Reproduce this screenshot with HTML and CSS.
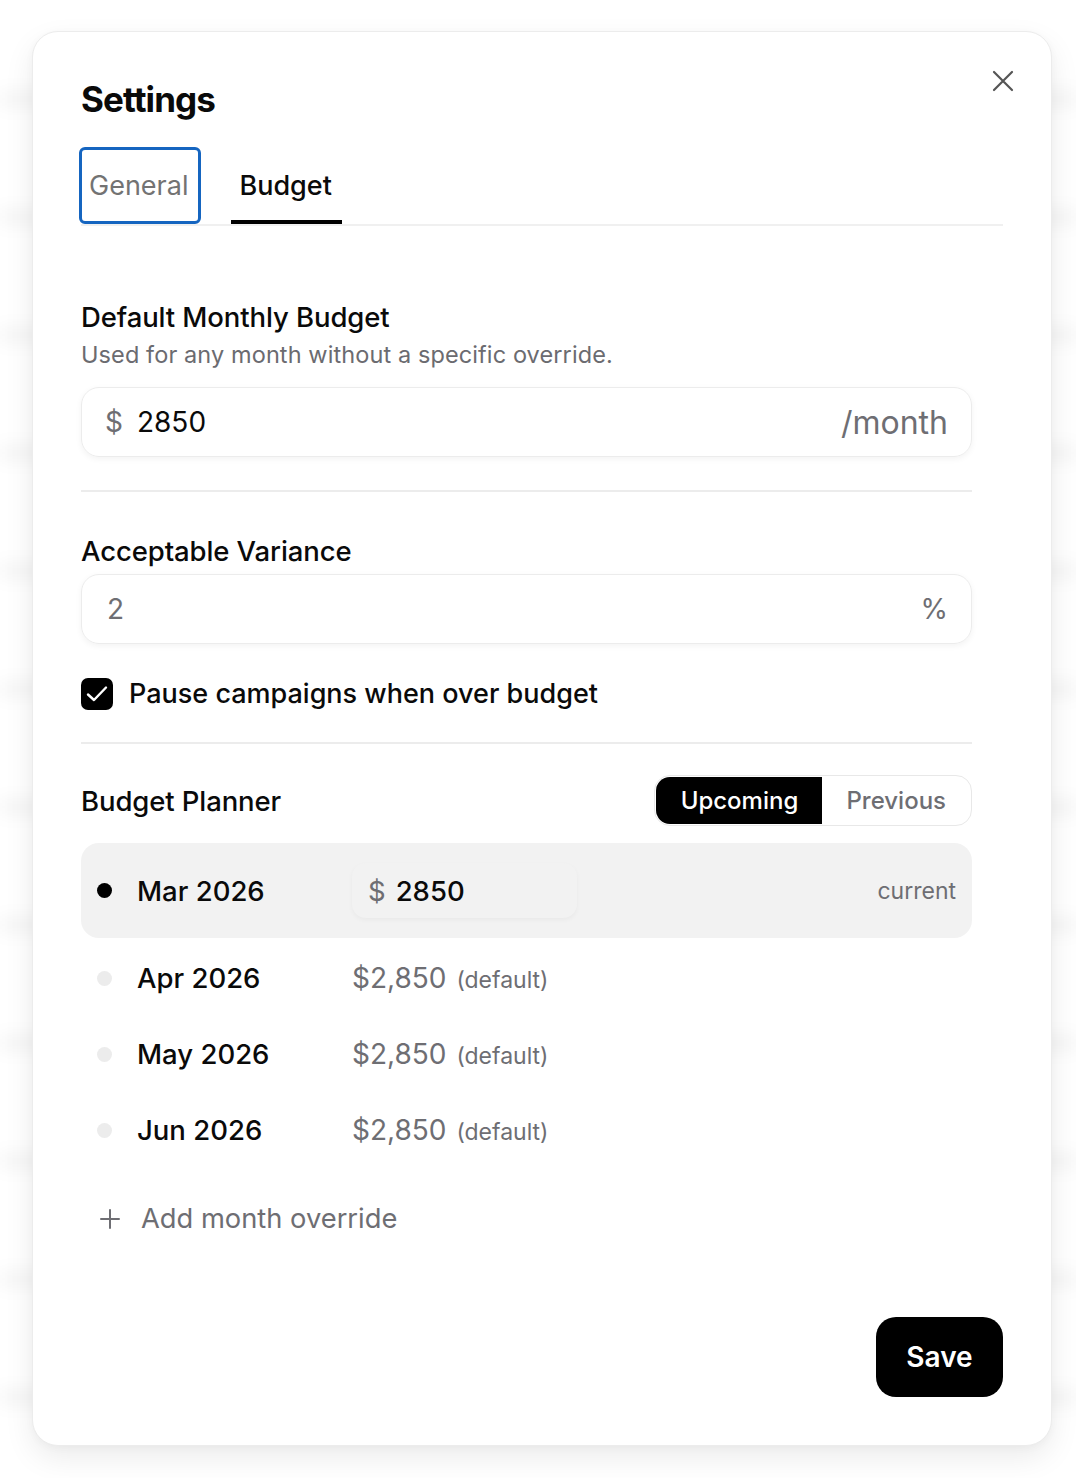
FILE: index.html
```html
<!DOCTYPE html>
<html lang="en">
<head>
    <meta charset="UTF-8">
    <meta name="viewport" content="width=device-width, initial-scale=1.0">
    <title>Settings</title>
    <link rel="stylesheet" href="styles.css">
</head>
<body>
    <div class="backdrop"></div>

    <div class="modal">
        <button class="close-btn" aria-label="Close">
            <svg width="24" height="24" viewBox="0 0 24 24" fill="none" stroke="#555" stroke-width="2.2" stroke-linecap="round">
                <path d="M3 3 L21 21 M21 3 L3 21"/>
            </svg>
        </button>

        <h1>Settings</h1>

        <div class="tabs">
            <button class="tab tab-focus">General</button>
            <button class="tab active">Budget</button>
        </div>

        <div class="panel">
            <section class="field">
                <h2>Default Monthly Budget</h2>
                <p class="hint">Used for any month without a specific override.</p>
                <div class="input-box">
                    <span class="prefix">$</span>
                    <span class="value">2850</span>
                    <span class="suffix suffix-lg">/month</span>
                </div>
            </section>

            <hr class="divider">

            <section class="field">
                <h2>Acceptable Variance</h2>
                <div class="input-box input-tight">
                    <span class="value muted">2</span>
                    <span class="suffix">%</span>
                </div>
                <label class="check-row">
                    <span class="checkbox">
                        <svg width="32" height="32" viewBox="0 0 32 32" fill="none" stroke="#fff" stroke-width="2.4" stroke-linecap="round" stroke-linejoin="round">
                            <path d="M7 16.5 L13 22 L25 9.5"/>
                        </svg>
                    </span>
                    Pause campaigns when over budget
                </label>
            </section>

            <hr class="divider divider-tight">

            <section class="planner">
                <div class="planner-head">
                    <h2>Budget Planner</h2>
                    <div class="segmented">
                        <button class="seg active">Upcoming</button>
                        <button class="seg">Previous</button>
                    </div>
                </div>

                <div class="month-row current">
                    <span class="dot"></span>
                    <span class="month">Mar 2026</span>
                    <div class="amount-input">
                        <span class="prefix">$</span>
                        <span>2850</span>
                    </div>
                    <span class="tag">current</span>
                </div>

                <div class="month-row">
                    <span class="dot"></span>
                    <span class="month">Apr 2026</span>
                    <span class="amount">$2,850 <small>(default)</small></span>
                </div>
                <div class="month-row">
                    <span class="dot"></span>
                    <span class="month">May 2026</span>
                    <span class="amount">$2,850 <small>(default)</small></span>
                </div>
                <div class="month-row">
                    <span class="dot"></span>
                    <span class="month">Jun 2026</span>
                    <span class="amount">$2,850 <small>(default)</small></span>
                </div>

                <button class="add-row">
                    <svg width="22" height="22" viewBox="0 0 22 22" fill="none" stroke="#6e6e73" stroke-width="2" stroke-linecap="round">
                        <path d="M11 2 V20 M2 11 H20"/>
                    </svg>
                    Add month override
                </button>
            </section>
        </div>

        <div class="footer">
            <button class="save-btn">Save</button>
        </div>
    </div>
</body>
</html>
```

FILE: styles.css
```css
* {
    margin: 0;
    padding: 0;
    box-sizing: border-box;
    font-family: Inter, "Noto Sans", sans-serif;
}

body {
    min-height: 100vh;
    background: #fff;
    color: #0a0a0a;
    padding: 31px 24px 32px 32px;
    position: relative;
    overflow: hidden;
}

/* Blurred page sitting behind the dialog */
.backdrop {
    position: absolute;
    inset: 0;
    background: repeating-linear-gradient(180deg,
        transparent 0, transparent 100px,
        rgba(0, 0, 0, 0.035) 100px, rgba(0, 0, 0, 0.035) 118px);
    background-position: 0 -10px;
    filter: blur(8px);
    z-index: 0;
}

.modal {
    position: relative;
    z-index: 1;
    width: 1020px;
    height: 1415px;
    background: #fff;
    border: 1px solid #ececec;
    border-radius: 26px;
    box-shadow: 0 12px 30px rgba(0, 0, 0, 0.08),
                0 2px 8px rgba(0, 0, 0, 0.03);
    padding: 45px 48px 48px 48px;
    display: flex;
    flex-direction: column;
}

.close-btn {
    position: absolute;
    top: 37px;
    right: 36px;
    background: none;
    border: none;
    width: 24px;
    height: 24px;
    cursor: pointer;
}

h1 {
    font-size: 35px;
    font-weight: 700;
    letter-spacing: -0.9px;
    line-height: 44px;
}

/* Tabs */
.tabs {
    margin-top: 26px;
    display: flex;
    gap: 30px;
    border-bottom: 2px solid #f0f0f0;
}

.tab {
    background: none;
    border: none;
    font-size: 27px;
    font-weight: 500;
    color: #0a0a0a;
    height: 77px;
    padding: 0 8px;
    cursor: pointer;
    position: relative;
}

.tab-focus {
    color: #737373;
    border: 3px solid #1565c0;
    border-radius: 6px;
    font-weight: 400;
    padding: 0 10px 0 7px;
    margin-left: -2px;
    margin-bottom: -1px;
}

.tab.active::after {
    content: "";
    position: absolute;
    left: 0;
    right: -2px;
    bottom: 0;
    height: 4px;
    background: #000;
}

/* Form area */
.panel {
    width: 891px;
}

.field h2,
.planner h2 {
    font-size: 27.5px;
    font-weight: 500;
    line-height: 34px;
    letter-spacing: -0.1px;
}

.field:first-child {
    margin-top: 74px;
}

.hint {
    margin-top: 6px;
    font-size: 23.5px;
    line-height: 30px;
    color: #6b6b70;
    letter-spacing: 0.1px;
}

.input-box {
    margin-top: 17px;
    height: 70px;
    border: 1px solid #ececec;
    border-radius: 18px;
    box-shadow: 0 2px 6px rgba(0, 0, 0, 0.05);
    display: flex;
    align-items: center;
    padding: 0 23px;
    font-size: 28px;
}

.input-tight {
    margin-top: 6px;
    padding-left: 25px;
}

.prefix {
    color: #6e6e73;
    margin-right: 14px;
}

.value {
    flex: 1;
}

.muted {
    color: #6e6e73;
}

.suffix {
    color: #6e6e73;
}

.suffix-lg {
    font-size: 32px;
}

.divider {
    border: none;
    border-top: 2px solid #ececec;
    margin: 33px 0 42px;
}

.divider-tight {
    margin-top: 31px;
    margin-bottom: 39px;
}

.check-row {
    margin-top: 33px;
    display: flex;
    align-items: center;
    gap: 16px;
    font-size: 27px;
    font-weight: 500;
    line-height: 34px;
}

.checkbox {
    width: 32px;
    height: 32px;
    background: #000;
    border-radius: 7px;
    display: flex;
    align-items: center;
    justify-content: center;
}

/* Planner */
.planner {
    margin-top: -8px;
}

.planner-head {
    display: flex;
    justify-content: space-between;
    align-items: center;
}

.segmented {
    display: flex;
    border: 1px solid #e8e8e8;
    border-radius: 16px;
    height: 51px;
    padding: 1px;
    overflow: hidden;
}

.seg {
    background: none;
    border: none;
    font-size: 24px;
    font-weight: 500;
    color: #6e6e73;
    padding: 0 24px;
    cursor: pointer;
}

.seg.active {
    background: #000;
    color: #fff;
    border-radius: 14px 0 0 14px;
    width: 166px;
}

.month-row {
    display: flex;
    align-items: center;
    height: 76px;
    padding: 0 16px;
}

.month-row.current {
    margin-top: 17px;
    height: 95px;
    background: #f2f2f2;
    border-radius: 18px;
    margin-bottom: 2px;
}

.dot {
    width: 15px;
    height: 15px;
    border-radius: 50%;
    background: #ececec;
    margin-right: 25px;
}

.current .dot {
    background: #000;
}

.month {
    width: 215px;
    font-size: 27.5px;
    font-weight: 500;
}

.amount-input {
    width: 225px;
    height: 55px;
    border-radius: 14px;
    background: #f2f2f2;
    box-shadow: 0 2px 5px rgba(0, 0, 0, 0.04);
    display: flex;
    align-items: center;
    padding-left: 16px;
    font-size: 27.5px;
    font-weight: 500;
}

.amount-input .prefix {
    margin-right: 10px;
    font-weight: 400;
}

.tag {
    margin-left: auto;
    font-size: 23px;
    color: #6e6e73;
}

.amount {
    font-size: 28px;
    color: #6e6e73;
}

.amount small {
    font-size: 23px;
    margin-left: 2px;
}

.add-row {
    margin-top: 34px;
    background: none;
    border: none;
    display: flex;
    align-items: center;
    gap: 20px;
    padding-left: 18px;
    font-size: 27.3px;
    color: #6e6e73;
    cursor: pointer;
}

.footer {
    margin-top: auto;
    display: flex;
    justify-content: flex-end;
}

.save-btn {
    width: 127px;
    height: 80px;
    background: #000;
    color: #fff;
    border: none;
    border-radius: 20px;
    font-size: 28px;
    font-weight: 600;
    cursor: pointer;
}
```
